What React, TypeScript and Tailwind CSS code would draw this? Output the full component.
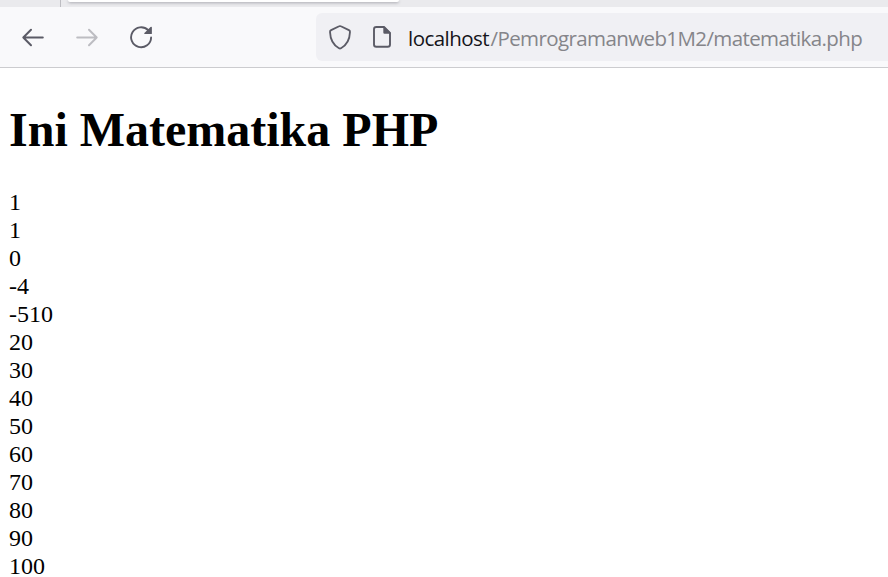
const results = ['1', '1', '0', '-4', '-510', '20', '30', '40', '50', '60', '70', '80', '90', '100'];

function BackIcon() {
  return (
    <svg width="24" height="24" viewBox="0 0 24 24" fill="none" stroke="#5b5b66" strokeWidth="2" strokeLinecap="round" strokeLinejoin="round">
      <path d="M21.8 12.5H2.3M10 4.8L2.3 12.5L10 20.2" />
    </svg>
  );
}

function ForwardIcon() {
  return (
    <svg width="24" height="24" viewBox="0 0 24 24" fill="none" stroke="#bdbdc2" strokeWidth="2" strokeLinecap="round" strokeLinejoin="round">
      <path d="M2.2 12.5H21.7M14 4.8L21.7 12.5L14 20.2" />
    </svg>
  );
}

function ReloadIcon() {
  return (
    <svg width="24" height="24" viewBox="0 0 24 24" fill="none">
      <path d="M19.2 5.2A10 10 0 1 0 22.1 12.4" stroke="#5b5b66" strokeWidth="1.9" strokeLinecap="round" />
      <path d="M22.9 2.4V8.4Q22.9 9.1 22.2 9.1H15.8Q14.7 8.9 15.4 8.1L21.5 2.1Q22.7 1.3 22.9 2.4Z" fill="#5b5b66" />
    </svg>
  );
}

function ShieldIcon() {
  return (
    <svg width="24" height="26" viewBox="0 0 24 26" fill="none" stroke="#5b5b66" strokeWidth="1.8" strokeLinejoin="round">
      <path d="M11.1 2.3Q12 1.8 12.9 2.3L20.9 6.1Q22.1 6.7 22 7.9C21.7 15.5 18.5 21.3 13 24.2Q12 24.8 11 24.2C5.5 21.3 2.3 15.5 2 7.9Q1.9 6.7 3.1 6.1Z" />
    </svg>
  );
}

function PageIcon() {
  return (
    <svg width="20" height="24" viewBox="0 0 20 24" fill="none">
      <path d="M4 2H12L18 8V19.5Q18 21.8 15.7 21.8H4.3Q2 21.8 2 19.5V4.3Q2 2 4.3 2Z" stroke="#5b5b66" strokeWidth="1.9" strokeLinejoin="round" />
      <path d="M11.3 1.8H12.5L18.3 7.6V8.8H12.5Q11.3 8.8 11.3 7.6Z" fill="#5b5b66" />
    </svg>
  );
}

export default function App() {
  return (
    <div className="h-[577px] w-full overflow-hidden bg-white text-black">
      <div className="flex h-[7px] bg-[#eaeaed]">
        <div className="w-[61px] border-r border-[#bdbdc2]" />
        <div className="ml-[7px] h-[2px] w-[331px] rounded-b bg-white shadow-[0_1px_3px_#a0a0a8]" />
      </div>
      <nav className="flex h-[61px] items-center border-b border-[#cccccf] bg-[#f9f9fb]">
        <button className="ml-[21px]" aria-label="Back"><BackIcon /></button>
        <button className="ml-[30px]" aria-label="Forward"><ForwardIcon /></button>
        <button className="ml-[30px]" aria-label="Reload"><ReloadIcon /></button>
        <div className="ml-[163px] flex h-12 flex-1 items-center rounded-l-[6px] bg-[#f0f0f4]">
          <div className="ml-3"><ShieldIcon /></div>
          <div className="ml-5"><PageIcon /></div>
          <div className="ml-4 flex whitespace-nowrap pt-[2px] font-['Open_Sans','Noto_Sans',sans-serif] text-[20.5px] leading-7">
            <span className="w-[82.5px] tracking-[-0.55px] text-[#15141a]">localhost</span>
            <span className="tracking-[-0.6px] text-[#85858a]">/Pemrogramanweb1M2/matematika.php</span>
          </div>
        </div>
      </nav>
      <main className="px-[9px] font-['Liberation_Serif',serif]">
        <h1 className="pt-[34px] text-5xl font-bold leading-[56px]">Ini Matematika PHP</h1>
        <div className="pt-[30px] text-2xl leading-7">
          {results.map((value, index) => <div key={index}>{value}</div>)}
        </div>
      </main>
    </div>
  );
}
